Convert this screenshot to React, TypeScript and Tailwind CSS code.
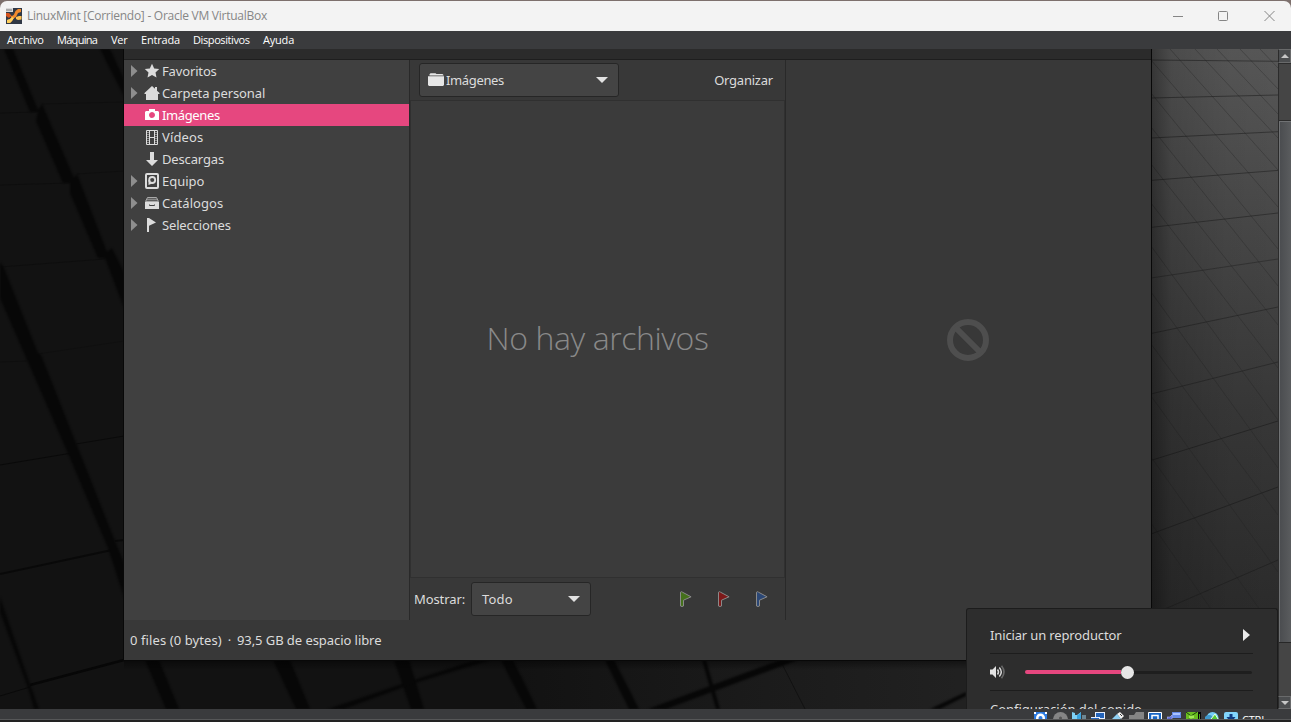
import React from "react";

type IconProps = { className?: string };

const BLOCK = "#070707";

function Wallpaper() {
  const darkBands = [
    "4,49 13,49 38,110 42,104 74,178 77,174 107,252 112,248 124,272 124,308 105,258 98,258 70,193 70,183 63,183 36,121 38,112 30,112",
    "100,49 110,49 124,79 124,96",
    "0,262 4,268 38,353 41,355 76,443 115,541 124,563 124,597 108,548 70,458 28,362 0,298",
    "0,597 30,684 39,709 34,709 28,688 0,612",
    "145,660 159,660 179,709 166,709",
    "273,660 290,660 310,709 296,709",
    "394,660 409,660 424,709 411,709",
    "501,660 513,660 537,709 526,709",
    "605,660 614,660 639,709 629,709",
    "702,660 706,660 720,709 716,709",
    "475,660 491,660 415,683 344,709 328,709 408,682",
    "780,660 798,660 666,709 648,709",
    "966,692 966,696 940,709 930,709",
  ];
  const rows: [number, number, number][] = [
    [60, 61.3, 0.6], [98, 95, 0.6], [138, 131.7, 0.6], [180.4, 170.4, 0.6], [227.4, 213, 0.6],
    [278, 259, 0.5], [333.5, 307, 0.6], [394, 362, 0.6], [460.4, 421, 0.8], [534, 487, 0.9], [615, 560, 0.9],
  ];
  const diagonals = [
    "M1260 49L1278 68", "M1240 49L1278 89", "M1217 49L1278 114", "M1195 49L1278 138", "M1170 49L1278 170",
    "M1151 60L1278 207", "M1151 93L1278 249", "M1151 127L1278 286", "M1151 164L1278 325", "M1151 203L1278 368",
    "M1151 246L1278 420", "M1151 292L1278 468", "M1151 344L1278 515", "M1151 396L1278 572",
    "M1151 457L1278 635", "M1151 523L1278 705",
  ];
  return (
    <svg className="absolute inset-0 h-full w-full" viewBox="0 49 1278 660" preserveAspectRatio="none">
      <defs>
        <linearGradient id="floor" x1="0" y1="0" x2="0" y2="1">
          <stop offset="0" stopColor="#575757" />
          <stop offset="0.25" stopColor="#484848" />
          <stop offset="0.55" stopColor="#373737" />
          <stop offset="0.85" stopColor="#2b2b2b" />
          <stop offset="1" stopColor="#232323" />
        </linearGradient>
        <linearGradient id="shade" x1="0" y1="0" x2="1" y2="0">
          <stop offset="0" stopColor="#000" stopOpacity="0.38" />
          <stop offset="0.16" stopColor="#000" stopOpacity="0.14" />
          <stop offset="0.6" stopColor="#000" stopOpacity="0.03" />
          <stop offset="1" stopColor="#000" stopOpacity="0" />
        </linearGradient>
        <linearGradient id="base" x1="0" y1="0" x2="1" y2="0">
          <stop offset="0" stopColor="#121212" />
          <stop offset="0.4" stopColor="#121212" />
          <stop offset="0.6" stopColor="#1b1b1b" />
          <stop offset="0.75" stopColor="#212121" />
        </linearGradient>
        <linearGradient id="drop" x1="0" y1="0" x2="0" y2="1">
          <stop offset="0" stopColor="#000" stopOpacity="0.45" />
          <stop offset="1" stopColor="#000" stopOpacity="0" />
        </linearGradient>
        <filter id="soft" x="-5%" y="-5%" width="110%" height="110%" colorInterpolationFilters="sRGB">
          <feGaussianBlur stdDeviation="0.9" />
        </filter>
      </defs>
      <rect x="0" y="49" width="1278" height="660" fill="url(#base)" />
      <g stroke={BLOCK} fill="none">
        <path d="M0 113L37 112M42 104L124 102M0 185L70 183M77 174L124 171M0 267L105 259" strokeOpacity="0.3" />
        <path d="M0 362L28 361M38 354L124 341" strokeOpacity="0.2" />
        <path d="M0 465L72 453M76 444L124 436M0 696L30 687" strokeOpacity="0.8" />
        <path d="M780 660L805 709" strokeOpacity="0.5" />
        <path d="M0 574L112 550M115 541L124 540" strokeWidth="2" strokeOpacity="0.8" />
        <path d="M30 685L124 660" strokeWidth="2.5" />
      </g>
      <g fill={BLOCK} filter="url(#soft)">
        {darkBands.map((points) => (
          <polygon key={points} points={points} />
        ))}
      </g>
      <rect x="1151" y="49" width="127" height="660" fill="url(#floor)" />
      <g stroke="#222" fill="none">
        {rows.map(([a, b, o]) => (
          <path key={a} d={`M1151 ${a}L1278 ${b}`} strokeOpacity={o} />
        ))}
        {diagonals.map((d) => (
          <path key={d} d={d} strokeOpacity="0.32" />
        ))}
      </g>
      <rect x="1151" y="49" width="127" height="660" fill="url(#shade)" />
      <rect x="124" y="660" width="1027" height="10" fill="url(#drop)" />
    </svg>
  );
}

function AppLogo() {
  return (
    <svg className="h-4 w-4" viewBox="0 0 16 16">
      <rect width="16" height="16" fill="#303845" />
      <path d="M0 5h3l2.500 2.500L3 10 0 8z" fill="#d5531d" />
      <path d="M3 7c2.500 1.500 4 1 5-.5L9.500 3 12 1h3v3l-3 1-2 4-2.500 1.500L6 13l-2 2H1v-3l3-1 1.500-2z" fill="#f28a2c" />
      <path d="M1 12l3-1 2-2 2 1-2 3-2 2H1z" fill="#ffcf5c" />
      <path d="M10 9l3-1h2.500v3.500L12 12l-2-1z" fill="#ffc152" />
      <rect width="7" height="4" fill="#d9d9d9" />
      <path d="M1 1v2M3 1v2M5 1v2" stroke="#555" strokeWidth=".7" />
    </svg>
  );
}

function StarIcon() {
  return (
    <svg className="h-4 w-4" viewBox="0 0 16 16" fill="#dcdcdc">
      <path d="M8 .8l2.200 4.600 5 .6-3.700 3.400 1 5L8 12l-4.500 2.400 1-5L.8 6l5-.6z" />
    </svg>
  );
}
function HomeIcon() {
  return (
    <svg className="h-4 w-4" viewBox="0 0 16 16" fill="#dcdcdc">
      <path d="M8 1l3 2.800V2h2v3.700L15.500 8v1H14v6H2V9H.5V8z" />
    </svg>
  );
}
function CameraIcon() {
  return (
    <svg className="h-4 w-4" viewBox="0 0 16 16" fill="#fff">
      <path fillRule="evenodd" d="M5 2h6v2h3l1 1v8H1V5l1-1h3zM8 5a3 3 0 1 0 .01 0z" />
    </svg>
  );
}
function FilmIcon() {
  return (
    <svg className="h-4 w-4" viewBox="0 0 16 16" fill="none" stroke="#dcdcdc">
      <path d="M2.500 1.500h11v14h-11zM5.500 2v13M10.500 2v13M5 8.500h6" />
      <path d="M4 3v12M12 3v12" strokeDasharray="1 1" />
    </svg>
  );
}
function DownIcon() {
  return (
    <svg className="h-4 w-4" viewBox="0 0 16 16" fill="#dcdcdc">
      <path d="M6 1h4v8h4l-6 6-6-6h4z" />
    </svg>
  );
}
function DiskIcon() {
  return (
    <svg className="h-4 w-4" viewBox="0 0 16 16" fill="none" stroke="#dcdcdc">
      <rect x="2" y="1" width="12" height="14" rx="1" strokeWidth="2" />
      <circle cx="8.200" cy="7" r="3" strokeWidth="1.800" />
      <path d="M4.500 7h1.700v2l2 1.500L4.500 12z" fill="#dcdcdc" stroke="none" />
    </svg>
  );
}
function DrawerIcon() {
  return (
    <svg className="h-4 w-4" viewBox="0 0 16 16">
      <path d="M3.500 2.500h9l2 4h-13z" fill="#5d5d5d" stroke="#a9a9a9" />
      <path d="M3 4.500h10" stroke="#888" />
      <path d="M1 7h14v7H1z" fill="#dcdcdc" />
      <path d="M5.500 9.500v1h5v-1" fill="none" stroke="#404040" />
    </svg>
  );
}
function FlagIcon() {
  return (
    <svg className="h-4 w-4" viewBox="0 0 16 16" fill="#dcdcdc">
      <path d="M3 1h2l7 4.500-7 3.200V15H3z" />
    </svg>
  );
}
function FolderIcon({ className }: IconProps) {
  return (
    <svg className={className} viewBox="0 0 16 16" fill="#e6e6e6">
      <path d="M1.500 2.200l1-1h5l1 .8h6l1 1v.5h-14zM0 4.200h16V13l-1 1H1l-1-1z" />
    </svg>
  );
}
function ColorFlag({ className }: IconProps) {
  return (
    <svg className={`h-4 w-3 ${className}`} viewBox="0 0 12 16">
      <path d="M.5 1.200q1-1 2 0l8.600 4.600-7.600 3.400V15q-1.500 1-3 0z" fill="currentColor" stroke="#8a8a8a" />
    </svg>
  );
}
function Caret() {
  return (
    <svg className="h-2 w-3" viewBox="0 0 12 8" fill="#e2e2e2">
      <path d="M0 1h12L6 7z" />
    </svg>
  );
}
function SpeakerIcon() {
  return (
    <svg className="h-4 w-4" viewBox="0 0 16 16" fill="none">
      <path d="M0 5.500h2.500L6 2v12l-3.500-3.500H0z" fill="#e4e4e4" />
      <path d="M7.500 5.500q2 2.500 0 5M9.300 3.500q4 4.500 0 9" stroke="#d8d8d8" strokeWidth="1.500" />
      <path d="M11.500 1.800q5 6.200 0 12.400" stroke="#686868" strokeWidth="1.600" />
    </svg>
  );
}

const places = [
  { name: "Favoritos", icon: <StarIcon />, open: true, track: "tracking-[-0.15px]" },
  { name: "Carpeta personal", icon: <HomeIcon />, open: true, track: "tracking-[-0.12px]" },
  { name: "Imágenes", icon: <CameraIcon />, open: false, track: "tracking-[-0.38px]", active: true },
  { name: "Vídeos", icon: <FilmIcon />, open: false, track: "tracking-[0.15px]" },
  { name: "Descargas", icon: <DownIcon />, open: false, track: "tracking-[-0.15px]" },
  { name: "Equipo", icon: <DiskIcon />, open: true, track: "tracking-[0px]" },
  { name: "Catálogos", icon: <DrawerIcon />, open: true, track: "tracking-[0.05px]" },
  { name: "Selecciones", icon: <FlagIcon />, open: true, track: "tracking-[-0.15px]" },
];

function FileManager() {
  return (
    <div className="absolute left-[124px] top-0 flex h-[611px] w-[1027px] flex-col bg-[#383838] shadow-[0_0_0_1px_#080808]">
      <div className="h-[11px] shrink-0 border-b border-[#1e1e1e] bg-[#2b2b2b]" />
      <div className="flex h-[560px]">
        <div className="w-[285px] bg-[#404040]">
          {places.map((p) => (
            <div key={p.name} className={`flex h-[22px] items-center ${p.active ? "bg-[#e6477f] text-white" : ""}`}>
              <svg className="ml-[7px] h-3 w-[7px]" viewBox="0 0 7 12">
                {p.open && <path d="M0 0l6.500 6L0 12z" fill="#8e8e8e" />}
              </svg>
              <span className="ml-1.5 mr-[2px]">{p.icon}</span>
              <span className={p.track}>{p.name}</span>
            </div>
          ))}
        </div>
        <div className="flex w-[377px] flex-col border-x border-[#292929]">
          <div className="flex h-10 items-center justify-between pl-[9px] pr-3">
            <div className="flex h-[34px] w-[200px] items-center rounded-[3px] border border-[#262626] bg-[#444] pl-2 pr-2.5">
              <FolderIcon className="mr-[2px] h-4 w-4" />
              <span className="flex-1 tracking-[-0.35px]">Imágenes</span>
              <Caret />
            </div>
            <span className="tracking-[-0.22px]">Organizar</span>
          </div>
          <div className="flex h-[478px] items-center justify-center border border-[#303030] bg-[#3b3b3b] pb-[3px] font-['Open_Sans',sans-serif] text-[32px] font-light text-[#898989]">
            <span className="tracking-[-0.42px]">No hay archivos</span>
          </div>
          <div className="flex flex-1 items-center pl-1 pr-[17px]">
            <span className="w-[57px] tracking-[-0.1px]">Mostrar:</span>
            <div className="flex h-[34px] w-[120px] items-center justify-between rounded-[3px] border border-[#262626] bg-[#444] px-2.5">
              <span className="tracking-[0.2px]">Todo</span>
              <Caret />
            </div>
            <div className="ml-auto flex gap-[26px]">
              <ColorFlag className="text-[#44701b]" />
              <ColorFlag className="text-[#7d1a1a]" />
              <ColorFlag className="text-[#2b4775]" />
            </div>
          </div>
        </div>
        <div className="flex flex-1 items-center justify-center pr-[2px]">
          <svg className="h-[42px] w-[42px]" viewBox="0 0 42 42" fill="none" stroke="#4e4e4e" strokeWidth="6">
            <circle cx="21" cy="21" r="18" />
            <path d="M8 8l26 26" />
          </svg>
        </div>
      </div>
      <div className="flex flex-1 items-center pl-1.5">
        <span className="tracking-[0.1px]">0 files (0 bytes)</span>
        <span className="w-[15px] text-center">·</span>
        <span className="tracking-[-0.06px]">93,5 GB de espacio libre</span>
      </div>
    </div>
  );
}

function SoundMenu() {
  return (
    <div className="absolute left-[966px] top-[559px] h-[101px] w-[312px] overflow-hidden rounded-t-[3px] border border-b-0 border-[#1c1c1c] bg-[#2d2d2d] pl-[23px] pr-6">
      <div className="mt-2 flex h-[37px] items-center justify-between border-b border-[#1d1d1d]">
        <span className="tracking-[-0.14px]">Iniciar un reproductor</span>
        <svg className="mr-[3px] h-3 w-[7px]" viewBox="0 0 7 12" fill="#eaeaea">
          <path d="M0 0l7 6-7 6z" />
        </svg>
      </div>
      <div className="flex h-[37px] items-center border-b border-[#1d1d1d]">
        <SpeakerIcon />
        <div className="ml-[19px] flex w-[227px] items-center">
          <div className="h-1 w-[96px] rounded-l-full bg-[#e6477f]" />
          <div className="h-[13px] w-[13px] rounded-full bg-[#e6e6e6]" />
          <div className="h-[3px] flex-1 rounded-r-full bg-[#1e1e1e]" />
        </div>
      </div>
      <div className="flex h-9 items-center tracking-[-0.03px]">Configuración del sonido</div>
    </div>
  );
}

function ScrollBar() {
  return (
    <div className="flex w-[13px] flex-col bg-[#454545] shadow-[inset_1px_0_0_#2b2b2b]">
      <div className="flex h-[14px] items-center justify-center border border-[#696a6b] border-l-[#2b2b2b] bg-[#4b4d4f]">
        <svg className="h-1 w-2" viewBox="0 0 8 4" fill="#c6c6c6"><path d="M4 0l4 4H0z" /></svg>
      </div>
      <div className="h-[58px] border-y border-[#2c2c2c]" />
      <div className="ml-px h-[521px] border-l border-t border-[#707274] bg-gradient-to-r from-[#4b4d50] to-[#5a5c5e] shadow-[0_1px_0_#272727]" />
      <div className="flex-1" />
      <div className="flex h-[13px] items-center justify-center border border-[#696a6b] border-l-[#2b2b2b] bg-[#4b4d4f]">
        <svg className="h-1 w-2" viewBox="0 0 8 4" fill="#c6c6c6"><path d="M4 4L8 0H0z" /></svg>
      </div>
    </div>
  );
}

const indicators = [
  <svg key="disk" className="h-4 w-4" viewBox="0 0 16 16"><rect width="13" height="14" fill="#2d7be0" /><circle cx="6.500" cy="6" r="4.500" fill="#fff" /><circle cx="6.500" cy="6" r="2" fill="#2d7be0" /><path d="M0 0h2v2H0zM11 0h2v2h-2z" fill="#fff" /></svg>,
  <svg key="cd" className="h-4 w-4" viewBox="0 0 16 16"><circle cx="7.500" cy="7.500" r="7.500" fill="#858585" /><circle cx="7.500" cy="6" r="1.500" fill="#555" /></svg>,
  <svg key="audio" className="h-4 w-4" viewBox="0 0 16 16"><path d="M0 0l3 1v10l-3-1zM3 3h2l4-3v12H3z" fill="#7ed0f5" /><path d="M5 3.500l4-3V12H5z" fill="#3aa3df" /><path d="M10 3h4v9h-4z" fill="#6e8794" /></svg>,
  <svg key="net" className="h-4 w-4" viewBox="0 0 16 16"><rect x="4.500" y=".5" width="9" height="6" fill="#2464ba" stroke="#e8f0ff" /><rect x="-.5" y="5.500" width="9" height="7" fill="#2464ba" stroke="#e8f0ff" /></svg>,
  <svg key="usb" className="h-4 w-4" viewBox="0 0 16 16"><path d="M7 2l3-2 4 4-3 3z" fill="#f3f3f3" /><path d="M7 2l4 5-6 6-5-4z" fill="#8fd0f4" /><path d="M2 8l4 4" stroke="#fff" /><path d="M10 2l2 2" stroke="#333" /></svg>,
  <svg key="shared" className="h-4 w-4" viewBox="0 0 16 16"><path d="M0 3h5l2-3h8v12H0z" fill="#858585" /></svg>,
  <svg key="display" className="h-4 w-4" viewBox="0 0 16 16"><path d="M.5.500h13v12H.5z" fill="#1765c5" stroke="#fff" /><path d="M4 3.500h6v6H4z" fill="#1765c5" stroke="#fff" strokeWidth="1.500" /></svg>,
  <svg key="record" className="h-4 w-4" viewBox="0 0 16 16"><path d="M5 0h9v6H5z" fill="#668be8" /><path d="M6 1h7v2H6z" fill="#a9c2ff" /><path d="M0 5h3l2-2v9H0z" fill="#5d6bd0" stroke="#b9c0ff" strokeWidth=".6" /></svg>,
  <svg key="cpu" className="h-4 w-4" viewBox="0 0 16 16"><path d="M0 0h12v12H0z" fill="#69bd20" /><path d="M0 0l5 4L11 0M1 10l4-6 5 6" stroke="#183d08" fill="none" /><path d="M3 3.500h5v3H3z" fill="#a0eb54" /><path d="M12 0h3v12h-3z" fill="#050505" /><path d="M13.500 2v9" stroke="#4ea91b" /></svg>,
  <svg key="mouse" className="h-4 w-4" viewBox="0 0 16 16"><circle cx="7.500" cy="6" r="6" fill="#76cdf6" /><circle cx="4" cy="8" r="5" fill="#4099cc" /><path d="M6 7l4-5 3 5-3 4z" fill="#55c934" stroke="#edffe6" /></svg>,
  <svg key="keyboard" className="h-4 w-4" viewBox="0 0 16 16"><rect width="14" height="13" rx="2" fill="#82d5fc" /><path d="M5.500 2h3v3h3l-4.500 6-4.500-6h3z" fill="#103c82" /></svg>,
];

export default function App() {
  return (
    <div className="flex h-[722px] w-[1291px] flex-col overflow-hidden bg-[#3a3b3d] font-['Noto_Sans',sans-serif] text-[13px] leading-4 text-[#dcdcdc]">
      <div className="h-[31px] shrink-0 bg-[#7d706d] pt-px">
        <header className="flex h-[30px] items-center rounded-t-[7px] bg-[#f3f3f3] pl-1.5 font-['Open_Sans',sans-serif] text-[12px] text-[#868686]">
          <AppLogo />
          <span className="ml-[5px] tracking-[-0.26px]">LinuxMint [Corriendo] - Oracle VM VirtualBox</span>
          <svg className="ml-auto mr-[15px] h-3 w-[104px]" viewBox="0 0 104 12" fill="none" stroke="#858585">
            <path d="M1 6.500h10M92.500 1l10 10M102.500 1l-10 10" />
            <rect x="46.500" y="1.500" width="9" height="9" rx="1" />
          </svg>
        </header>
      </div>
      <nav className="flex h-[18px] shrink-0 items-center bg-[#3a3b3d] pl-[7px] font-['Open_Sans',sans-serif] text-[11px] text-white">
        <span className="w-[50px] tracking-[-0.25px]">Archivo</span>
        <span className="w-[54px] tracking-[-0.7px]">Máquina</span>
        <span className="w-[30px] tracking-[-0.3px]">Ver</span>
        <span className="w-[52px] tracking-[-0.2px]">Entrada</span>
        <span className="w-[70px] tracking-[-0.4px]">Dispositivos</span>
        <span className="tracking-[-0.2px]">Ayuda</span>
      </nav>
      <main className="flex h-[660px] shrink-0">
        <div className="relative w-[1278px] overflow-hidden">
          <Wallpaper />
          <FileManager />
          <SoundMenu />
        </div>
        <ScrollBar />
      </main>
      <footer className="flex h-[11px] shrink-0 items-start overflow-hidden border-b border-[#565758] pl-[1034px] pt-[3px] font-['Open_Sans',sans-serif] text-[11px] text-white">
        <div className="flex gap-[3px]">{indicators}</div>
        <span className="ml-0.5 tracking-[-0.2px]">CTRL</span>
      </footer>
      <div className="h-[2px] bg-[#222]" />
    </div>
  );
}
